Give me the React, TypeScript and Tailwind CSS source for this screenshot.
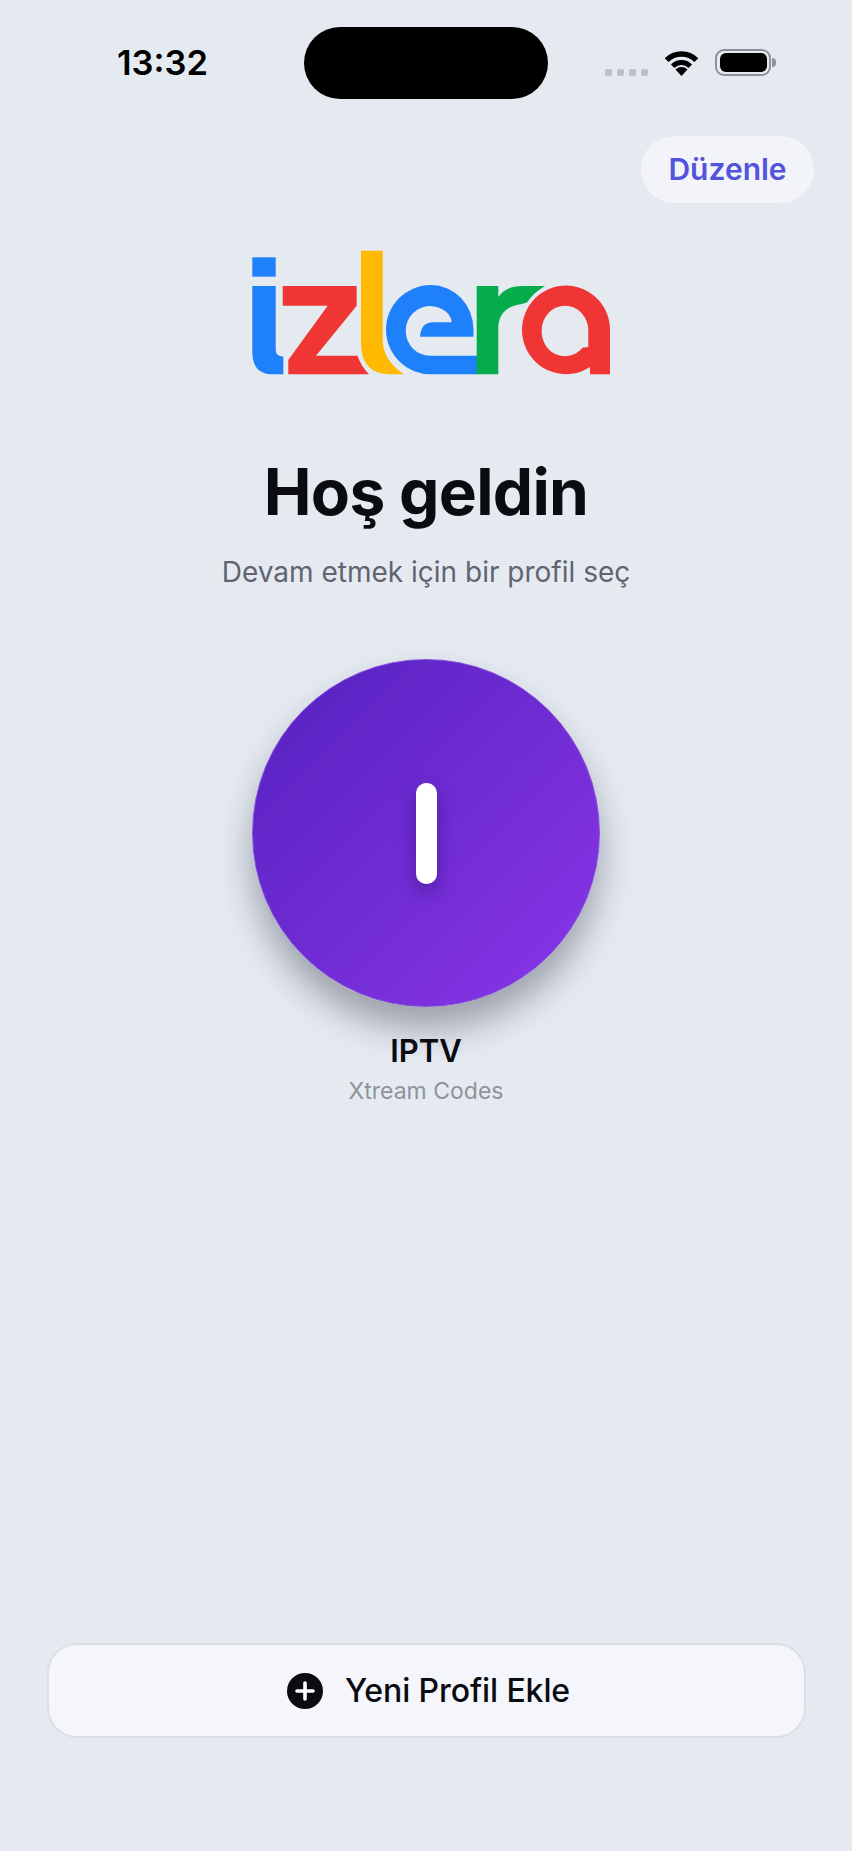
function WifiIcon() {
  return (
    <svg width="37" height="27" viewBox="0 0 36 27" className="shrink-0">
      <path d="M3.15 11.15a21 21 0 0 1 29.7 0" fill="none" stroke="#000" strokeWidth="5.5" />
      <path d="M9.16 17.16a12.5 12.5 0 0 1 17.68 0" fill="none" stroke="#000" strokeWidth="5" />
      <path d="M18 27l-6-6.6a8.6 8.6 0 0 1 12 0z" fill="#000" />
    </svg>
  );
}

function Battery() {
  return (
    <div className="ml-[15px] flex items-center">
      <div className="flex h-[27px] w-[56px] items-center justify-center rounded-[9px] border-2 border-[#8d9096]">
        <div className="h-[19px] w-[47px] rounded-[6px] bg-black" />
      </div>
      <div className="ml-px h-[9px] w-[4px] rounded-r-full bg-[#8d9096]" />
    </div>
  );
}

function StatusBar() {
  return (
    <div className="flex items-center pt-[27px]">
      <div className="w-[304px] pl-[117px] text-[34.5px] leading-none font-semibold text-black">13:32</div>
      <div className="h-[72px] w-[244px] rounded-full bg-black" />
      <div className="mb-[2px] flex items-center pl-[57px]">
        <div className="mt-[20px] flex gap-[5px]">
          <span className="size-[7px] rounded-[2px] bg-[#bcc0c8]" />
          <span className="size-[7px] rounded-[2px] bg-[#bcc0c8]" />
          <span className="size-[7px] rounded-[2px] bg-[#bcc0c8]" />
          <span className="size-[7px] rounded-[2px] bg-[#bcc0c8]" />
        </div>
        <div className="ml-[15px]">
          <WifiIcon />
        </div>
        <Battery />
      </div>
    </div>
  );
}

function Logo() {
  return (
    <svg width="372" height="135" viewBox="240 245 372 135" className="mx-auto mt-[42px] block" aria-label="izlera">
      <path d="M252.3 257.3H275.7V276.7H252.3Z" fill="#1f80fb" />
      <path d="M252.3 286H275.7V350Q275.7 356 283.3 356.7V374.3H273Q252.3 374.3 252.3 352Z" fill="#1f80fb" />
      <path d="M282.7 286H356.7V305.7L316 355.7H357.5Q361 366 369 374.3H288.3V360L327.7 305.7H282.7Z" fill="#f03535" />
      <path d="M361 250.7H382.7V340Q382.7 360 404 374.3H390Q361 374 361 343Z" fill="#ffb900" />
      <path
        d="M477 374.3H431A45 44.65 0 0 1 431 285A42.5 44.6 0 0 1 473.5 329.6V336.7H420Q421 322.3 433 322.3H451.7A23 17 0 0 0 430 306A24.3 24.85 0 0 0 430 355.7H477Z"
        fill="#1f80fb"
      />
      <path d="M476.7 286H498.3V297Q506 286 522 286H545Q533 293 527 302.5L522 304Q498.3 307 498.3 328V374.3H476.7Z" fill="#05ac4c" />
      <path
        fillRule="evenodd"
        d="M590 367A44 44.3 0 1 1 610 330V374.3H590ZM541.7 330.4A23.3 24.7 0 0 1 588.3 330.4V347L582.5 347.8A23.3 24.7 0 0 1 541.7 330.4Z"
        fill="#f03535"
      />
    </svg>
  );
}

function ProfileCard() {
  return (
    <div className="mt-[69px] flex flex-col items-center">
      <div className="flex size-[348px] items-center justify-center rounded-full border border-[#8550dc] bg-gradient-to-br from-[#5520bf] to-[#8b36e8] shadow-[0_22px_34px_rgba(25,30,50,0.36)]">
        {/* the profile initial, a rounded "I" */}
        <div role="img" aria-label="I" className="h-[101px] w-[21px] rounded-[10px] bg-white shadow-[0_8px_18px_rgba(40,10,100,0.45)]" />
      </div>
      <p className="mt-[25px] text-[31px] leading-[38px] font-semibold text-[#0b0b12]">IPTV</p>
      <p className="mt-[7px] text-[23px] leading-[29px] text-[#8e929c]">Xtream Codes</p>
    </div>
  );
}

export default function App() {
  return (
    <div className="flex min-h-[1851px] w-[852px] flex-col bg-[#e5eaf1] font-['Inter',sans-serif]">
      <StatusBar />

      <div className="mt-[37px] flex justify-end pr-[38px]">
        <button className="flex h-[67px] w-[173px] items-center justify-center rounded-full bg-[#f2f4fa] text-[30px] font-semibold text-[#5353dc]">
          Düzenle
        </button>
      </div>

      <Logo />

      <div className="mt-[80px] text-center">
        <h1 className="text-[64px] leading-none font-bold tracking-[-0.7px] text-[#0b0b12]">Hoş geldin</h1>
        <p className="mt-[30px] text-[28px] leading-[36px] text-[#5f6470]">Devam etmek için bir profil seç</p>
      </div>

      <ProfileCard />

      <button className="mt-auto mr-[46px] mb-[113px] ml-[47px] flex h-[95px] items-center justify-center gap-[22px] rounded-[30px] border-2 border-[#dcdfe5] bg-[#f4f6fb] pl-[4px]">
        <svg width="36" height="36" viewBox="0 0 36 36">
          <circle cx="18" cy="18" r="18" fill="#0b0b12" />
          <path d="M18 10v16M10 18h16" stroke="#fff" strokeWidth="3.6" strokeLinecap="round" />
        </svg>
        <span className="text-[32px] leading-none font-medium tracking-[-0.1px] text-[#0b0b12]">Yeni Profil Ekle</span>
      </button>
    </div>
  );
}
